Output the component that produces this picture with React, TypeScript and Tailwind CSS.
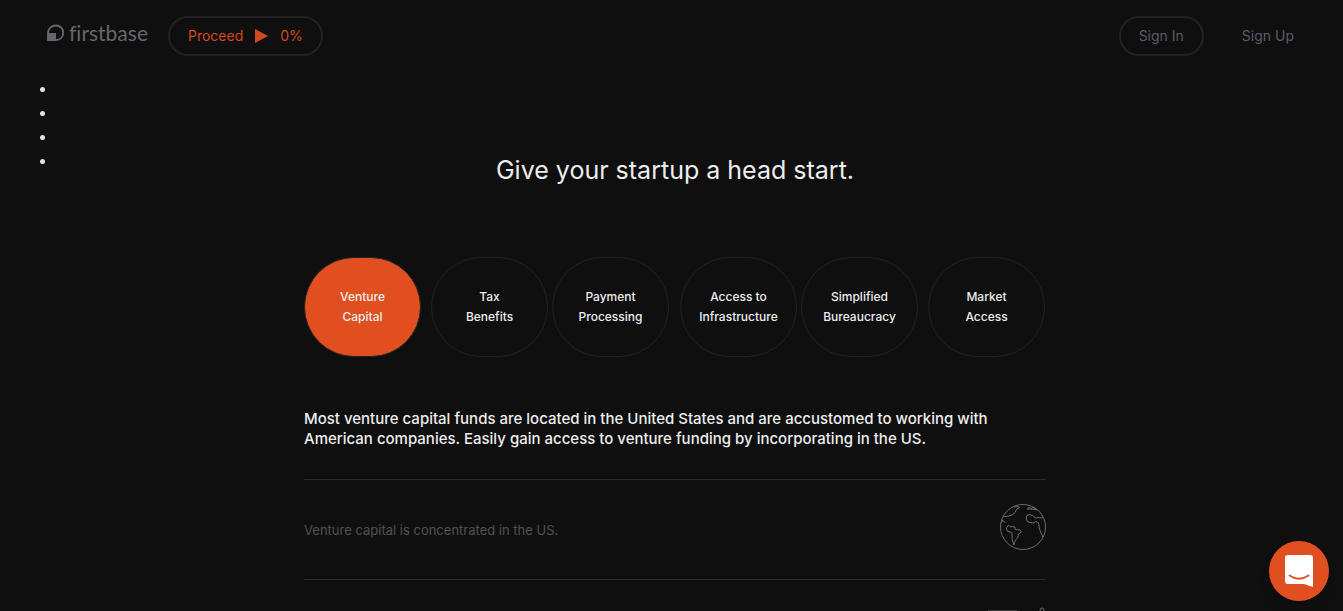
const tabs = [
  ["Venture", "Capital"],
  ["Tax", "Benefits"],
  ["Payment", "Processing"],
  ["Access to", "Infrastructure"],
  ["Simplified", "Bureaucracy"],
  ["Market", "Access"],
];

const tabClass = "h-[100px] w-[117px] rounded-[50px] border border-[#222] text-xs leading-5 font-medium";

function Logo() {
  return (
    <a href="#" aria-label="firstbase" className="flex items-center gap-1 pb-[6px] text-[#66666e]">
      <svg width="18" height="18" viewBox="0 0 18 18" fill="none" aria-hidden>
        <path
          d="M1 16V9C1 4.600 4.500 1.500 9 1.500C13.300 1.500 16.200 4.600 16.200 8.800C16.200 13 13.300 16 9 16Z"
          stroke="currentColor"
          strokeWidth="1.800"
        />
        <path d="M0.100 9H9V16.900H0.100Z" fill="currentColor" />
      </svg>
      <span className="font-['Lato',sans-serif] text-[21px] leading-6 [font-variant-ligatures:none]">firstbase</span>
    </a>
  );
}

function GlobeIcon() {
  return (
    <svg width="46" height="46" viewBox="0 0 46 46" fill="none" stroke="#6b6b72" strokeWidth="1" strokeLinejoin="round" aria-hidden>
      <circle cx="23" cy="23" r="22.500" />
      <path d="M4 12.500L9 12L12 11L15 8.500L16.500 5.500L19.500 3.500L18 2.500L14 3" />
      <path d="M1 19L2.500 17L2 15.500L5.500 19" />
      <path d="M27 5L29 3.500L31 4.500L33 3.500L37 6L32 5.200L27 5" />
      <path d="M43 14L38 13.500L35 14L33 11.500L29 10.500L26.500 12V16L28 18L33 19L36 17.500L38.500 19L39.500 25L41 29L43 33" />
      <path d="M8.500 21L6.500 24L7 27L12 28.500V35L14 41L15 37L18 33L18.500 30L21.500 28L20 26L15 25.500V23L10 22.500Z" />
    </svg>
  );
}

function FlagIcon() {
  return (
    <svg width="58" height="46" viewBox="0 0 58 46" fill="none" stroke="#6b6b72" aria-hidden>
      <circle cx="54" cy="6" r="2" />
      <path d="M0 6.500H29V40H0Z" stroke="#3a3a3e" />
      <path d="M54 8V44" />
    </svg>
  );
}

export default function App() {
  return (
    <div className="h-screen overflow-hidden bg-[#0f0f0f] font-['Inter',sans-serif] text-[#ededed]">
      <header className="flex items-center justify-between pt-4 pr-[49px] pb-5 pl-[47px]">
        <div className="flex items-center gap-5">
          <Logo />
          <button type="button" className="flex h-10 items-center gap-3 rounded-full border-2 border-[#222] px-[18px] text-sm text-[#d5481f]">
            Proceed
            <svg width="13" height="14" viewBox="0 0 13 14" fill="currentColor" aria-hidden>
              <path d="M0 0L13 7L0 14Z" />
            </svg>
            0%
          </button>
        </div>
        <nav className="flex items-center gap-[38px] text-sm text-[#5b5c66]">
          <a href="#" className="flex h-10 items-center rounded-full border-2 border-[#222] px-[18px]">
            Sign In
          </a>
          <a href="#">Sign Up</a>
        </nav>
      </header>

      <div className="grid grid-cols-[1fr_minmax(0,742px)_1fr] pl-[7px]">
        <ul className="list-disc pl-[50px] text-base leading-6 text-[#e0e0e0]">
          <li />
          <li />
          <li />
          <li />
        </ul>

        <main>
          <h1 className="pt-[74px] text-center text-[25px] leading-10">Give your startup a head start.</h1>

          <div className="mt-[67px] grid grid-cols-[127fr_121fr_128fr_121fr_127fr_118fr]">
            {tabs.map(([first, second], i) => (
              <button key={second} type="button" className={i === 0 ? `${tabClass} bg-[#e04f20]` : tabClass}>
                {first}
                <br />
                {second}
              </button>
            ))}
          </div>

          <p className="mt-[52px] pb-[30px] text-[15px] leading-5 font-medium">
            Most venture capital funds are located in the United States and are accustomed to working with American
            companies. Easily gain access to venture funding by incorporating in the US.
          </p>

          <div className="flex h-[100px] items-start justify-between border-t border-[#2a2a2a] pt-6 text-[13px] text-[#505057]">
            <p className="leading-[52px]">Venture capital is concentrated in the US.</p>
            <GlobeIcon />
          </div>
          <div className="flex h-[100px] items-start justify-end border-t border-[#2a2a2a] pt-6">
            <FlagIcon />
          </div>
        </main>
      </div>

      <button
        type="button"
        aria-label="Open chat"
        className="fixed right-[14px] bottom-[10px] flex size-[60px] items-center justify-center rounded-full bg-[#e04f20] shadow-lg"
      >
        <svg width="28" height="32" viewBox="0 0 28 32" aria-hidden>
          <path d="M3 0H25Q28 0 28 3V32L19 29H3Q0 29 0 26V3Q0 0 3 0Z" fill="#fff" />
          <path d="M4.500 20.500Q14 27 23.500 20.500" fill="none" stroke="#e04f20" strokeWidth="1.800" strokeLinecap="round" />
        </svg>
      </button>
    </div>
  );
}
